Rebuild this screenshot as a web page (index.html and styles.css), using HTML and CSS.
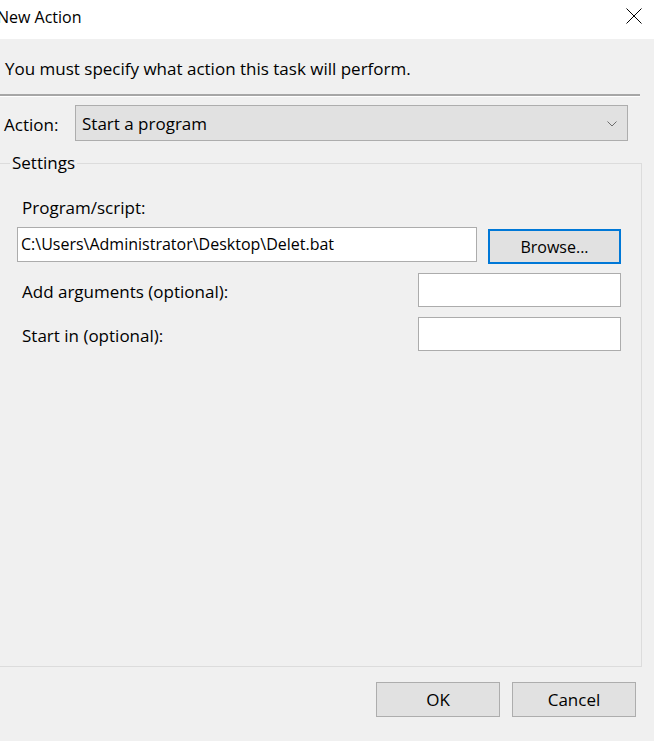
FILE: index.html
```html
<!DOCTYPE html>
<html>
<head>
<meta charset="utf-8">
<link rel="stylesheet" href="styles.css">
</head>
<body>
<div class="window">
  <div class="titlebar">
    <span class="title">New Action</span>
    <span class="close">
      <svg width="16" height="16" viewBox="0 0 16 16"><path d="M0.5 0.5 L15.5 15.5 M15.5 0.5 L0.5 15.5" stroke="#000" stroke-width="1" fill="none"/></svg>
    </span>
  </div>
  <div class="content">
    <div class="instruction">You must specify what action this task will perform.</div>
    <div class="separator"></div>
    <div class="action-row">
      <span class="action-label">Action:</span>
      <div class="combo">
        <span>Start a program</span>
        <svg class="chev" width="10" height="6" viewBox="0 0 10 6"><path d="M0.5 0.5 L5 5 L9.5 0.5" stroke="#6d6d6d" stroke-width="1" fill="none"/></svg>
      </div>
    </div>
    <fieldset class="settings">
      <legend>Settings</legend>
      <div class="field-label">Program/script:</div>
      <div class="program-row">
        <div class="textbox program">C:\Users\Administrator\Desktop\Delet.bat</div>
        <div class="btn browse">Browse...</div>
      </div>
      <div class="opt-row">
        <span class="field-label">Add arguments (optional):</span>
        <div class="textbox opt"></div>
      </div>
      <div class="opt-row second">
        <span class="field-label">Start in (optional):</span>
        <div class="textbox opt"></div>
      </div>
    </fieldset>
    <div class="buttons">
      <div class="btn">OK</div>
      <div class="btn">Cancel</div>
    </div>
  </div>
</div>
</body>
</html>
```
FILE: styles.css
```css
html, body {
  margin: 0;
  padding: 0;
  background: #f0f0f0;
}
body {
  font-family: "Open Sans", "Noto Sans", sans-serif;
  font-size: 17px;
  color: #000;
  width: 654px;
  height: 741px;
  overflow: hidden;
}
.window {
  display: flex;
  flex-direction: column;
  height: 741px;
}
.titlebar {
  height: 39px;
  background: #fff;
  display: flex;
  align-items: center;
  justify-content: space-between;
  flex-shrink: 0;
}
.title {
  margin-left: -3px;
  font-size: 16px;
  line-height: 20px;
  margin-top: -5px;
}
.close {
  width: 16px;
  height: 16px;
  margin-right: 12px;
  margin-top: -8px;
  display: flex;
}
.content {
  background: #f0f0f0;
  display: flex;
  flex-direction: column;
}
.instruction {
  margin-top: 20px;
  line-height: 20px;
  padding-left: 5px;
}
.separator {
  margin-top: 15px;
  width: 640px;
  height: 2px;
  background: #a6a6a6;
  border-bottom: 1px solid #fff;
}
.action-row {
  margin-top: 8px;
  display: flex;
  align-items: center;
}
.action-label {
  width: 75px;
  padding-left: 4px;
  box-sizing: border-box;
  line-height: 20px;
  margin-top: 3px;
}
.combo {
  width: 553px;
  height: 36px;
  box-sizing: border-box;
  border: 1px solid #adadad;
  background: #e1e1e1;
  display: flex;
  align-items: center;
  justify-content: space-between;
  padding: 0 10px 0 6px;
}
.chev {
  margin-top: 1px;
}
.settings {
  margin: 12px 12px 0 0;
  padding: 0 20px 0 17px;
  border: 1px solid #dcdcdc;
  border-left: none;
  height: 514px;
  box-sizing: border-box;
  min-width: 0;
}
.settings legend {
  margin-left: -7px;
  padding: 0 2px;
  line-height: 20px;
}
.field-label {
  line-height: 20px;
  padding-left: 5px;
}
.settings > .field-label {
  margin-top: 25px;
}
.program-row {
  margin-top: 9px;
  display: flex;
  align-items: flex-start;
  gap: 11px;
}
.textbox {
  box-sizing: border-box;
  border: 1px solid #acacac;
  background: #fff;
  line-height: 20px;
  padding: 6px 3px;
  white-space: nowrap;
  font-size: 16px;
}
.program {
  width: 460px;
  height: 35px;
}
.btn {
  box-sizing: border-box;
  width: 124px;
  height: 35px;
  background: #e1e1e1;
  border: 1px solid #adadad;
  display: flex;
  align-items: center;
  justify-content: center;
}
.browse {
  width: 133px;
  margin-top: 2px;
  border: 2px solid #0078d7;
  font-size: 16px;
}
.opt-row {
  margin-top: 9px;
  display: flex;
  align-items: center;
  justify-content: space-between;
}
.opt-row .field-label {
  margin-top: 4px;
}
.opt-row.second {
  margin-top: 10px;
}
.opt {
  width: 203px;
  height: 34px;
}
.buttons {
  margin-top: 15px;
  display: flex;
  justify-content: flex-end;
  gap: 12px;
  padding-right: 18px;
}
```
